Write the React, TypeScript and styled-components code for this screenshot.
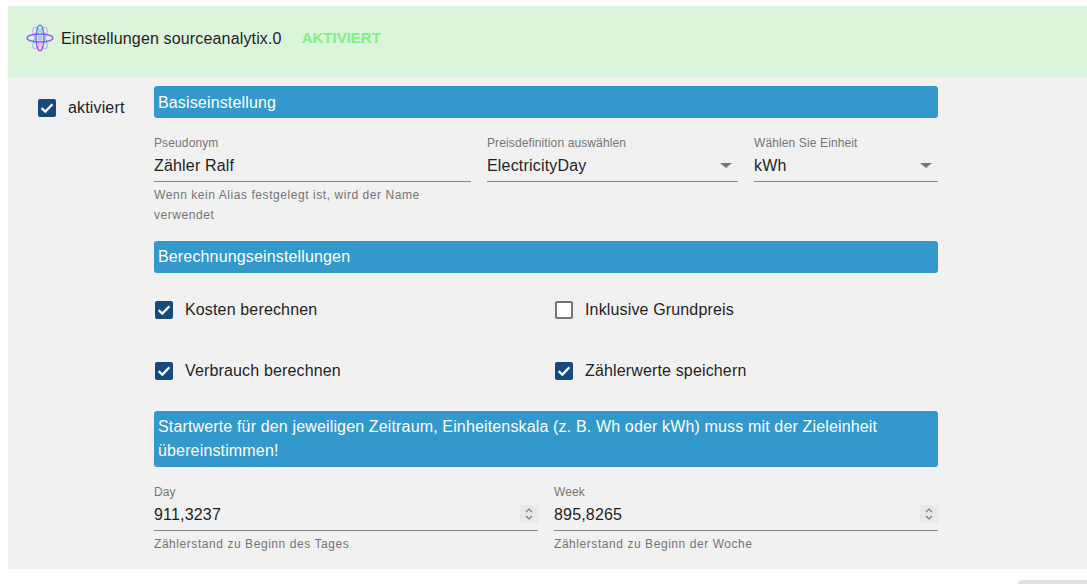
import React from 'react';
import styled, { createGlobalStyle } from 'styled-components';

const colors = {
  headerBg: '#dcf3dc',
  panelBg: '#f1f1f1',
  blue: '#3399cc',
  navy: '#164a7c',
  green: '#7ef27e',
  text: '#1f1f1f',
  muted: '#757575',
  line: '#8a8a8a',
};

const GlobalStyle = createGlobalStyle`
  html, body {
    margin: 0;
    padding: 0;
    background: #fff;
    overflow: hidden;
  }
  body {
    font-family: "Liberation Sans", Arial, sans-serif;
    color: ${colors.text};
  }
`;

const Page = styled.div`
  height: 584px;
  padding: 6px 0 0 8px;
  box-sizing: border-box;
  overflow: hidden;
`;

const Header = styled.header`
  height: 72px;
  background: ${colors.headerBg};
  display: flex;
  align-items: center;
  padding: 0 0 8px 18px;
  box-sizing: border-box;
`;

const Title = styled.span`
  font-size: 16px;
  letter-spacing: 0.15px;
  margin: 2px 0 0 7px;
`;

const Status = styled.span`
  font-size: 15px;
  font-weight: 700;
  color: ${colors.green};
  margin-left: 20px;
  margin-top: -2px;
`;

const Panel = styled.main`
  height: 491px;
  background: ${colors.panelBg};
  display: flex;
  padding-top: 8px;
  box-sizing: border-box;
`;

const Side = styled.aside`
  width: 146px;
  flex: none;
  padding: 12px 0 0 30px;
  box-sizing: border-box;
`;

const Content = styled.div`
  width: 784px;
  display: flex;
  flex-direction: column;
`;

const SectionBar = styled.div`
  background: ${colors.blue};
  color: #fff;
  font-size: 16px;
  letter-spacing: 0.15px;
  line-height: 24px;
  padding: 4px;
  border-radius: 3px;
`;

const FirstBar = styled(SectionBar)`
  padding: 5px 4px 3px;
`;

const FieldRow = styled.div<{ $columns: string; $height: number }>`
  display: grid;
  grid-template-columns: ${(p) => p.$columns};
  column-gap: 16px;
  height: ${(p) => p.$height}px;
  padding-top: 18px;
  box-sizing: border-box;
`;

const FieldLabel = styled.div`
  font-size: 12px;
  letter-spacing: 0.12px;
  line-height: 14px;
  color: ${colors.muted};
`;

const FieldValue = styled.div`
  display: flex;
  align-items: center;
  justify-content: space-between;
  height: 32px;
  font-size: 16px;
  letter-spacing: 0.18px;
  border-bottom: 1px solid ${colors.line};
  box-sizing: border-box;
`;

const Helper = styled.div`
  font-size: 12px;
  line-height: 20px;
  letter-spacing: 0.56px;
  color: ${colors.muted};
  margin-top: 3px;
`;

const CheckGrid = styled.div`
  display: grid;
  grid-template-columns: 400px 1fr;
  grid-auto-rows: 61px;
  padding-top: 6px;
  height: 138px;
  box-sizing: border-box;
`;

const CheckItem = styled.label`
  display: flex;
  align-items: center;
  gap: 12px;
  font-size: 16px;
  letter-spacing: 0.15px;
  padding-left: 1px;
`;

const CheckSide = styled(CheckItem)`
  padding: 1px 0 0;
`;

const Box = styled.span<{ $checked?: boolean }>`
  width: 18px;
  height: 18px;
  flex: none;
  border-radius: 2px;
  box-sizing: border-box;
  display: flex;
  align-items: center;
  justify-content: center;
  background: ${(p) => (p.$checked ? colors.navy : '#fff')};
  border: ${(p) => (p.$checked ? 'none' : '2px solid #757575')};
`;

const ArrowDown = styled.span`
  width: 0;
  height: 0;
  border-left: 6px solid transparent;
  border-right: 6px solid transparent;
  border-top: 5px solid #777;
  margin: 0 6px 0 0;
`;

const Spinner = styled.span`
  width: 18px;
  height: 18px;
  background: #e9e9ed;
  display: flex;
  align-items: center;
  justify-content: center;
  margin-top: -2px;
`;

const Footer = styled.div`
  display: flex;
  justify-content: flex-end;
  padding-top: 11px;
`;

const FooterButton = styled.div`
  width: 69px;
  height: 30px;
  background: #e0e0e0;
  border-radius: 4px 0 0 0;
`;

function AtomIcon() {
  return (
    <svg width="28" height="28" viewBox="0 0 28 28" fill="none">
      <defs>
        <linearGradient id="atomMain" x1="0" y1="0" x2="0" y2="1">
          <stop offset="0" stopColor="#3f8cf2" />
          <stop offset="1" stopColor="#b63ff0" />
        </linearGradient>
        <linearGradient id="atomSoft" x1="0" y1="0" x2="0" y2="1">
          <stop offset="0" stopColor="#7fd0fa" />
          <stop offset="1" stopColor="#e6a6f5" />
        </linearGradient>
      </defs>
      <ellipse cx="14" cy="14" rx="12" ry="4.6" stroke="url(#atomSoft)" strokeWidth="1.2" transform="rotate(60 14 14)" />
      <ellipse cx="14" cy="14" rx="12" ry="4.6" stroke="url(#atomSoft)" strokeWidth="1.2" transform="rotate(-60 14 14)" />
      <ellipse cx="14" cy="14" rx="4" ry="12.8" stroke="url(#atomMain)" strokeWidth="1.3" />
      <ellipse cx="14" cy="14" rx="13" ry="4" stroke="#8f55f2" strokeWidth="1.3" />
      <circle cx="14" cy="14" r="2.8" fill="#a9c8f5" />
    </svg>
  );
}

function Check({ checked }: { checked?: boolean }) {
  return (
    <Box $checked={checked}>
      {checked && (
        <svg width="16" height="16" viewBox="0 0 16 16" fill="none">
          <path d="M2.6 8.2 L6.3 11.6 L13.4 4.2" stroke="#fff" strokeWidth="2.3" />
        </svg>
      )}
    </Box>
  );
}

function SpinIcon() {
  return (
    <Spinner>
      <svg width="10" height="16" viewBox="0 0 10 16" fill="none">
        <path d="M2 6 L5 3 L8 6 M2 10 L5 13 L8 10" stroke="#77777c" strokeWidth="1.2" />
      </svg>
    </Spinner>
  );
}

export default function App() {
  return (
    <Page>
      <GlobalStyle />
      <Header>
        <AtomIcon />
        <Title>Einstellungen sourceanalytix.0</Title>
        <Status>AKTIVIERT</Status>
      </Header>
      <Panel>
        <Side>
          <CheckSide>
            <Check checked />
            aktiviert
          </CheckSide>
        </Side>
        <Content>
          <FirstBar>Basiseinstellung</FirstBar>
          <FieldRow $columns="317px 251px 184px" $height={123}>
            <div>
              <FieldLabel>Pseudonym</FieldLabel>
              <FieldValue>Zähler Ralf</FieldValue>
              <Helper>Wenn kein Alias festgelegt ist, wird der Name verwendet</Helper>
            </div>
            <div>
              <FieldLabel>Preisdefinition auswählen</FieldLabel>
              <FieldValue>
                ElectricityDay
                <ArrowDown />
              </FieldValue>
            </div>
            <div>
              <FieldLabel>Wählen Sie Einheit</FieldLabel>
              <FieldValue>
                kWh
                <ArrowDown />
              </FieldValue>
            </div>
          </FieldRow>
          <SectionBar>Berechnungseinstellungen</SectionBar>
          <CheckGrid>
            <CheckItem>
              <Check checked />
              Kosten berechnen
            </CheckItem>
            <CheckItem>
              <Check />
              Inklusive Grundpreis
            </CheckItem>
            <CheckItem>
              <Check checked />
              Verbrauch berechnen
            </CheckItem>
            <CheckItem>
              <Check checked />
              Zählerwerte speichern
            </CheckItem>
          </CheckGrid>
          <SectionBar>
            Startwerte für den jeweiligen Zeitraum, Einheitenskala (z. B. Wh oder kWh) muss mit der Zieleinheit
            übereinstimmen!
          </SectionBar>
          <FieldRow $columns="384px 384px" $height={102}>
            <div>
              <FieldLabel>Day</FieldLabel>
              <FieldValue>
                911,3237
                <SpinIcon />
              </FieldValue>
              <Helper>Zählerstand zu Beginn des Tages</Helper>
            </div>
            <div>
              <FieldLabel>Week</FieldLabel>
              <FieldValue>
                895,8265
                <SpinIcon />
              </FieldValue>
              <Helper>Zählerstand zu Beginn der Woche</Helper>
            </div>
          </FieldRow>
        </Content>
      </Panel>
      <Footer>
        <FooterButton />
      </Footer>
    </Page>
  );
}
